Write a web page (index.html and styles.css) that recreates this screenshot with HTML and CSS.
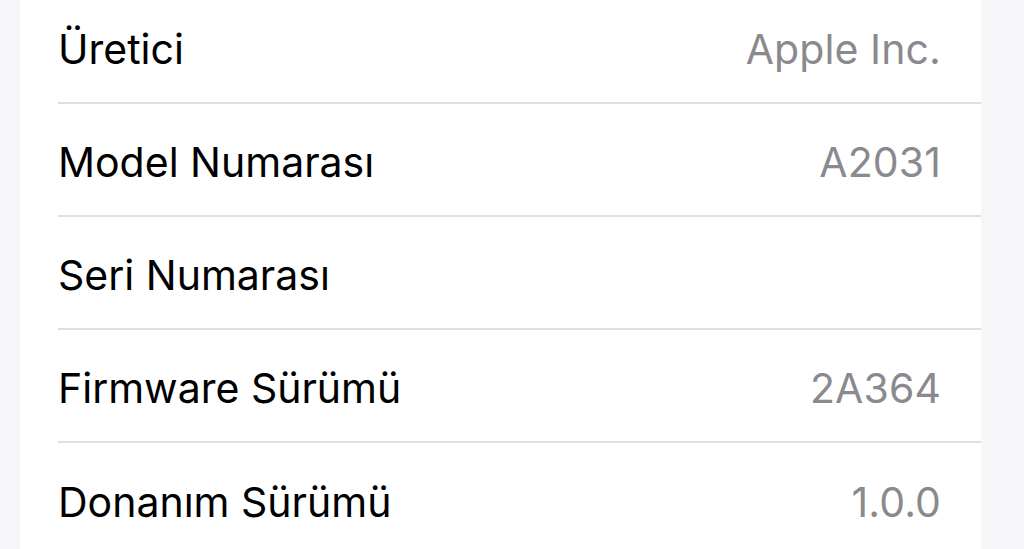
FILE: index.html
```html
<!DOCTYPE html>
<html lang="tr">
  <head>
    <meta charset="utf-8" />
    <meta name="viewport" content="width=device-width, initial-scale=1.0" />
    <title>Hakkında</title>
    <link rel="stylesheet" href="styles.css">
  </head>
  <body>
    <ul class="ul--info">
      <li class="li--row">
        <span class="span--label">Üretici</span>
        <span class="span--value">Apple Inc.</span>
      </li>
      <li class="li--row">
        <span class="span--label">Model Numarası</span>
        <span class="span--value">A2031</span>
      </li>
      <li class="li--row">
        <span class="span--label">Seri Numarası</span>
        <span class="span--value"></span>
      </li>
      <li class="li--row">
        <span class="span--label">Firmware Sürümü</span>
        <span class="span--value">2A364</span>
      </li>
      <li class="li--row">
        <span class="span--label">Donanım Sürümü</span>
        <span class="span--value">1.0.0</span>
      </li>
    </ul>
  </body>
</html>
```

FILE: styles.css
```css
body {
  margin: 0;
  background-color: #f6f6f9;
  font-family: Inter, "Noto Sans", sans-serif;
  overflow: hidden;
}
.ul--info {
  list-style: none;
  margin: -9px 43px 0 20px;
  padding: 0 0 0 38px;
  background-color: #fff;
}
.li--row {
  display: flex;
  align-items: center;
  justify-content: space-between;
  box-sizing: border-box;
  height: 113px;
  padding: 5px 40px 0 0;
  border-bottom: 2px solid #dfdfe2;
}
.li--row:last-child {
  border-bottom: 0;
}
.span--label {
  font-size: 41px;
  color: #000;
  letter-spacing: 0;
}
.span--value {
  font-size: 41px;
  color: #8a8a8e;
  letter-spacing: 0.1px;
}
```
